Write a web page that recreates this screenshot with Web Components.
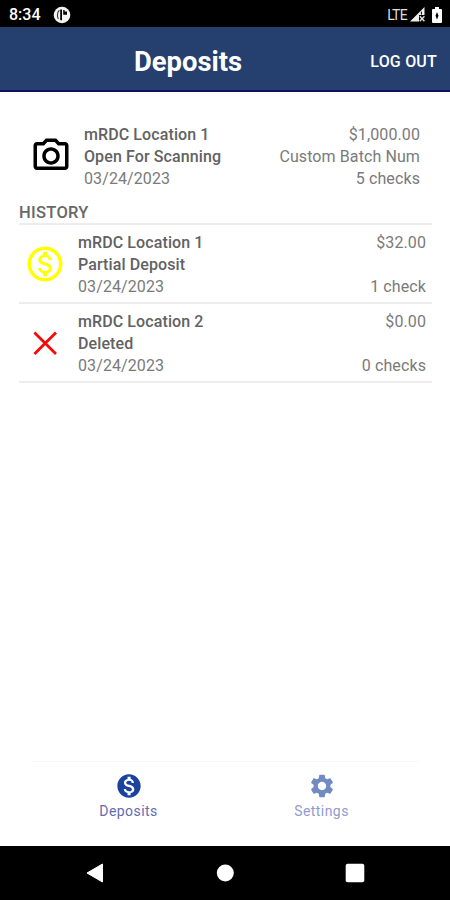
<!DOCTYPE html>
<html lang="en">
<head>
<meta charset="utf-8">
<title>Deposits</title>
<style>
  body {
    margin: 0;
    background: #fff;
    font-family: Roboto, "Liberation Sans", sans-serif;
  }
</style>
</head>
<body>
<deposit-app>
  <status-bar slot="top" time="8:34" network="LTE"></status-bar>
  <title-bar slot="top" action="LOG OUT">Deposits</title-bar>

  <deposit-row current icon="camera" amount="$1,000.00" batch="Custom Batch Num" checks="5 checks" date="03/24/2023">
    <span>mRDC Location 1</span>
    <span slot="status">Open For Scanning</span>
  </deposit-row>
  <section-title>HISTORY</section-title>
  <deposit-row icon="partial" amount="$32.00" checks="1 check" date="03/24/2023">
    <span>mRDC Location 1</span>
    <span slot="status">Partial Deposit</span>
  </deposit-row>
  <deposit-row icon="deleted" amount="$0.00" checks="0 checks" date="03/24/2023">
    <span>mRDC Location 2</span>
    <span slot="status">Deleted</span>
  </deposit-row>

  <tab-bar slot="bottom">
    <tab-item icon="deposits" active>Deposits</tab-item>
    <tab-item icon="settings">Settings</tab-item>
  </tab-bar>
  <system-nav slot="bottom"></system-nav>
</deposit-app>

<script>
const ICONS = {
  camera: `<svg width="42" height="42" viewBox="0 0 24 24" fill="#000"><path d="M14.12 4l1.83 2H20v12H4V6h4.05l1.83-2h4.24M15 2H9L7.17 4H4c-1.1 0-2 .9-2 2v12c0 1.1.9 2 2 2h16c1.1 0 2-.9 2-2V6c0-1.1-.9-2-2-2h-3.17L15 2zm-3 7c1.65 0 3 1.35 3 3s-1.35 3-3 3-3-1.35-3-3 1.35-3 3-3m0-2c-2.76 0-5 2.24-5 5s2.24 5 5 5 5-2.24 5-5-2.24-5-5-5z"/></svg>`,
  partial: `<svg width="42" height="42" viewBox="0 0 24 24" fill="#ff0"><path d="M12 2C6.48 2 2 6.48 2 12s4.48 10 10 10 10-4.48 10-10S17.52 2 12 2zm0 18c-4.41 0-8-3.59-8-8s3.59-8 8-8 8 3.59 8 8-3.59 8-8 8zm.31-8.86c-1.77-.45-2.34-.94-2.34-1.67 0-.84.79-1.43 2.1-1.43 1.38 0 1.9.66 1.94 1.64h1.71c-.05-1.34-.87-2.57-2.49-2.97V5H10.9v1.69c-1.51.32-2.72 1.3-2.72 2.81 0 1.79 1.49 2.69 3.66 3.21 1.95.46 2.34 1.15 2.34 1.87 0 .53-.39 1.39-2.1 1.39-1.6 0-2.23-.72-2.32-1.64H8.04c.1 1.7 1.36 2.66 2.86 2.97V19h2.34v-1.67c1.52-.29 2.72-1.16 2.73-2.77-.01-2.2-1.9-2.96-3.66-3.42z"/></svg>`,
  deleted: `<svg width="42" height="42" viewBox="0 0 42 42" fill="none" stroke="#f80808" stroke-width="2.8"><path d="M10.4 10.6l21.6 21.4M32 10.6l-21.6 21.4"/></svg>`,
  deposits: `<svg width="28" height="28" viewBox="0 0 24 24" fill="currentColor"><path d="M12 2C6.48 2 2 6.48 2 12s4.48 10 10 10 10-4.48 10-10S17.52 2 12 2zm1.41 16.09V20h-2.67v-1.93c-1.71-.36-3.16-1.46-3.27-3.4h1.96c.1 1.05.82 1.87 2.65 1.87 1.96 0 2.4-.98 2.4-1.59 0-.83-.44-1.61-2.67-2.14-2.48-.6-4.18-1.62-4.18-3.67 0-1.72 1.39-2.84 3.11-3.21V4h2.67v1.95c1.86.45 2.79 1.86 2.85 3.39H14.3c-.05-1.11-.64-1.87-2.22-1.87-1.5 0-2.4.68-2.4 1.64 0 .84.65 1.39 2.67 1.91s4.18 1.39 4.18 3.91c-.01 1.83-1.38 2.83-3.12 3.16z"/></svg>`,
  settings: `<svg width="28" height="28" viewBox="0 0 24 24" fill="currentColor"><path d="M19.14 12.94c.04-.3.06-.61.06-.94 0-.32-.02-.64-.07-.94l2.03-1.58c.18-.14.23-.41.12-.61l-1.92-3.32c-.12-.22-.37-.29-.59-.22l-2.39.96c-.5-.38-1.03-.7-1.62-.94l-.36-2.54c-.04-.24-.24-.41-.48-.41h-3.84c-.24 0-.43.17-.47.41l-.36 2.54c-.59.24-1.13.57-1.62.94l-2.39-.96c-.22-.08-.47 0-.59.22L2.74 8.87c-.12.21-.08.47.12.61l2.03 1.58c-.05.3-.09.63-.09.94s.02.64.07.94l-2.03 1.58c-.18.14-.23.41-.12.61l1.92 3.32c.12.22.37.29.59.22l2.39-.96c.5.38 1.03.7 1.62.94l.36 2.54c.05.24.24.41.48.41h3.84c.24 0 .44-.17.47-.41l.36-2.54c.59-.24 1.13-.56 1.62-.94l2.39.96c.22.08.47 0 .59-.22l1.92-3.32c.12-.22.07-.47-.12-.61l-2.01-1.58zM12 15.6c-1.98 0-3.6-1.62-3.6-3.6s1.62-3.6 3.6-3.6 3.6 1.62 3.6 3.6-1.62 3.6-3.6 3.6z"/></svg>`,
};

class DepositApp extends HTMLElement {
  constructor() {
    super();
    this.attachShadow({ mode: 'open' });
    this.shadowRoot.innerHTML = `
      <style>
        :host {
          display: flex;
          flex-direction: column;
          height: 900px;
          overflow: hidden;
        }

        main {
          flex: 1;
          padding: 32px 18px 0 19px;
        }
      </style>
      <slot name="top"></slot>
      <main><slot></slot></main>
      <slot name="bottom"></slot>
    `;
  }
}

class StatusBar extends HTMLElement {
  constructor() {
    super();
    this.attachShadow({ mode: 'open' });
    this.shadowRoot.innerHTML = `
      <style>
        :host {
          display: flex;
          align-items: center;
          height: 27px;
          padding: 2px 8px 0 9px;
          box-sizing: border-box;
          background: #000;
          color: #fff;
        }

        .time {
          font-size: 16px;
          font-weight: 500;
          width: 44px;
        }

        .network {
          margin-left: auto;
          font-size: 14px;
          letter-spacing: -0.7px;
          color: #ddd;
        }

        svg {
          display: block;
        }

        .signal {
          margin: 0 7px 0 3px;
        }
      </style>
      <span class="time">${this.getAttribute('time')}</span>
      <svg width="18" height="18" viewBox="0 0 18 18">
        <circle cx="9" cy="9" r="8.3" fill="#f4f4f4"/>
        <path d="M6.4 4.2C4 6 4 11 5.4 13" stroke="#333" stroke-width="1.1" fill="none"/>
        <path d="M7.2 3.6h1.8v10.6H7.2z" fill="#000"/>
        <path d="M10.2 8.8V4h1.4v1.4H14v3.4z" fill="#000"/>
      </svg>
      <span class="network">${this.getAttribute('network')}</span>
      <svg class="signal" width="15" height="15" viewBox="0 0 15 15">
        <path d="M0 14.5L14.5 0v8H9v6.5z" fill="#eee"/>
        <path d="M9.8 9.2l4.6 5M14.4 9.2l-4.6 5" stroke="#ddd" stroke-width="1.5"/>
        <path d="M11.4 4.6v3" stroke="#000" stroke-width="1"/>
      </svg>
      <svg width="10" height="16" viewBox="0 0 10 16">
        <path d="M3 0h4v2h2q1 0 1 1v12q0 1-1 1H1q-1 0-1-1V3q0-1 1-1h2z" fill="#fff"/>
        <path d="M5 5L3.5 8.7l1.5 3.7 1.5-3.7z" fill="#000"/>
      </svg>
    `;
  }
}

class TitleBar extends HTMLElement {
  constructor() {
    super();
    this.attachShadow({ mode: 'open' });
    this.shadowRoot.innerHTML = `
      <style>
        :host {
          display: flex;
          align-items: center;
          justify-content: space-between;
          height: 65px;
          padding: 5px 13px 0 134px;
          box-sizing: border-box;
          background: #25406f;
          border-bottom: 2px solid #10105f;
          color: #fff;
        }

        h1 {
          margin: 2px 0 0;
          font-size: 27.4px;
          font-weight: 700;
        }

        button {
          padding: 0;
          border: none;
          background: none;
          color: inherit;
          font: 500 16px Roboto, sans-serif;
          letter-spacing: 0.2px;
          white-space: nowrap;
        }
      </style>
      <h1><slot></slot></h1>
      <button>${this.getAttribute('action')}</button>
    `;
  }
}

class SectionTitle extends HTMLElement {
  constructor() {
    super();
    this.attachShadow({ mode: 'open' });
    this.shadowRoot.innerHTML = `
      <style>
        :host {
          display: block;
          height: 21px;
          line-height: 22px;
          margin-top: 12px;
          border-bottom: 2px solid #ededed;
          color: #686868;
          font-size: 16.5px;
          font-weight: 500;
          letter-spacing: 0.3px;
        }
      </style>
      <slot></slot>
    `;
  }
}

class DepositRow extends HTMLElement {
  constructor() {
    super();
    this.attachShadow({ mode: 'open' });
    this.shadowRoot.innerHTML = `
      <style>
        :host {
          display: flex;
          height: 70px;
          padding: 7px 6px 0 5px;
          border-bottom: 2px solid #ededed;
          color: #7a7a7a;
          font-size: 16px;
          line-height: 22px;
          letter-spacing: 0.1px;
        }

        :host([current]) {
          height: 66px;
          padding: 0 12px 0 11px;
          border-bottom: none;
        }

        .icon {
          width: 42px;
          height: 42px;
          margin: 11px 12px 0 0;
        }

        .place {
          color: #626262;
          font-weight: 500;
        }

        .details {
          flex: 1;
        }

        .totals {
          text-align: right;
        }

        .totals div {
          height: 22px;
        }

        svg {
          display: block;
        }
      </style>
      <div class="icon">${ICONS[this.getAttribute('icon')]}</div>
      <div class="details">
        <div class="place"><slot></slot></div>
        <div class="place"><slot name="status"></slot></div>
        <div>${this.getAttribute('date')}</div>
      </div>
      <div class="totals">
        <div>${this.getAttribute('amount')}</div>
        <div>${this.getAttribute('batch') || ''}</div>
        <div>${this.getAttribute('checks')}</div>
      </div>
    `;
  }
}

class TabBar extends HTMLElement {
  constructor() {
    super();
    this.attachShadow({ mode: 'open' });
    this.shadowRoot.innerHTML = `
      <style>
        :host {
          display: grid;
          grid-template-columns: 1fr 1fr;
          height: 85px;
          margin: 0 32px;
          box-sizing: border-box;
          border-top: 1px solid #f7f7f7;
        }
      </style>
      <slot></slot>
    `;
  }
}

class TabItem extends HTMLElement {
  constructor() {
    super();
    this.attachShadow({ mode: 'open' });
    this.shadowRoot.innerHTML = `
      <style>
        :host {
          display: flex;
          flex-direction: column;
          align-items: center;
          padding-top: 10px;
          color: #718bc2;
          cursor: pointer;
        }

        :host([active]) {
          color: #1b429c;
        }

        span {
          margin-top: 3px;
          font-size: 14px;
          line-height: 16px;
          letter-spacing: 0.45px;
          color: #929bce;
        }

        :host([active]) span {
          color: #626cb0;
        }

        svg {
          display: block;
        }
      </style>
      ${ICONS[this.getAttribute('icon')]}
      <span><slot></slot></span>
    `;
  }
}

class SystemNav extends HTMLElement {
  constructor() {
    super();
    this.attachShadow({ mode: 'open' });
    this.shadowRoot.innerHTML = `
      <style>
        :host {
          display: flex;
          justify-content: space-between;
          align-items: center;
          height: 54px;
          padding: 0 85px 0 86px;
          box-sizing: border-box;
          background: #000;
        }
      </style>
      <svg width="18" height="20" viewBox="0 0 18 20"><path d="M16.5 1v18L1 10z" fill="#fff" stroke="#fff" stroke-linejoin="round"/></svg>
      <svg width="18" height="18" viewBox="0 0 18 18"><circle cx="9.3" cy="9" r="8.5" fill="#fff"/></svg>
      <svg width="20" height="20" viewBox="0 0 20 20"><rect x=".7" y=".7" width="18.6" height="18.6" rx="2" fill="#fff"/></svg>
    `;
  }
}

customElements.define('deposit-app', DepositApp);
customElements.define('status-bar', StatusBar);
customElements.define('title-bar', TitleBar);
customElements.define('section-title', SectionTitle);
customElements.define('deposit-row', DepositRow);
customElements.define('tab-bar', TabBar);
customElements.define('tab-item', TabItem);
customElements.define('system-nav', SystemNav);
</script>
</body>
</html>
